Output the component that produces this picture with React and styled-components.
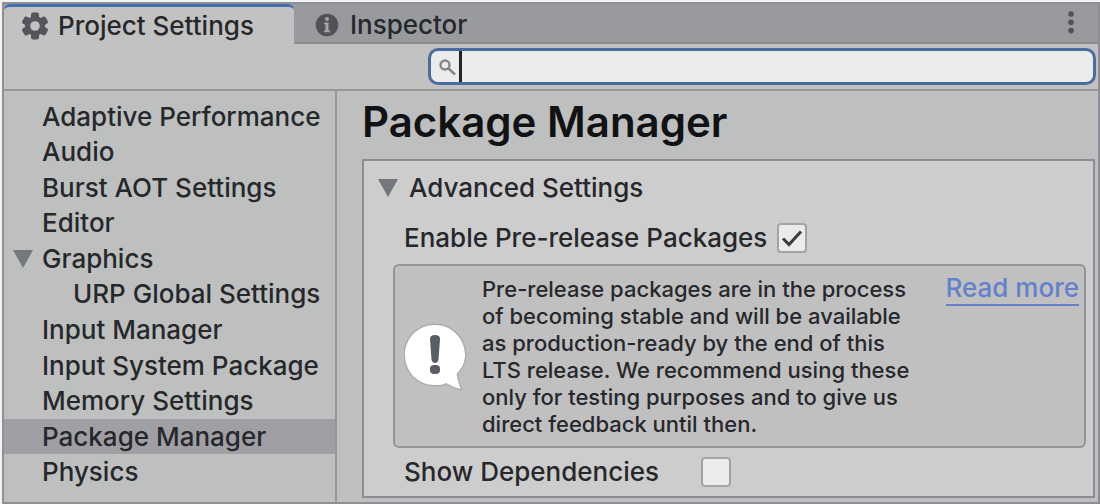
import { useState } from 'react';
import styled, { createGlobalStyle } from 'styled-components';

const GlobalStyle = createGlobalStyle`
  * {
    box-sizing: border-box;
  }
  body {
    margin: 0;
    background: #f4f4f5;
    font-family: Inter, 'Liberation Sans', sans-serif;
    color: #26282c;
  }
  button,
  input {
    font: inherit;
    color: inherit;
  }
`;

const Window = styled.div`
  display: flex;
  flex-direction: column;
  min-height: calc(100vh - 2px);
  margin: 2px 0 0 2px;
  border: 2px solid #8f9095;
  background: #bec0bf;
  font-size: 26px;
  font-weight: 450;
  line-height: 32px;
`;

const TabBar = styled.div`
  display: flex;
  height: 40px;
  background: #999a9e;
`;

const Tab = styled.button`
  display: flex;
  align-items: center;
  gap: ${props => (props.$active ? '9px' : '11px')};
  padding: 0 40px 0 ${props => (props.$active ? '17px' : '21px')};
  border: 0;
  border-top: 3px solid ${props => (props.$active ? '#446db0' : 'transparent')};
  border-bottom: ${props => (props.$active ? '0' : '2px solid #8c8d91')};
  border-radius: ${props => (props.$active ? '6px 6px 0 0' : '0')};
  background: ${props => (props.$active ? '#c2c2c2' : 'transparent')};
  white-space: nowrap;
`;

const TabFill = styled.div`
  display: flex;
  flex: 1;
  justify-content: flex-end;
  align-items: center;
  padding-right: 19px;
  border-bottom: 2px solid #8c8d91;
`;

const MenuButton = styled.button`
  display: flex;
  padding: 0;
  border: 0;
  background: none;
`;

const Toolbar = styled.div`
  display: flex;
  justify-content: flex-end;
  padding: 4px 2px 4px 25px;
  border-bottom: 2px solid #95969a;
  background: #c2c2c2;
`;

const SearchField = styled.label`
  display: flex;
  flex: 0 1 668px;
  align-items: center;
  height: 37px;
  padding-left: 8px;
  overflow: hidden;
  border: 3px solid #4a6c9f;
  border-radius: 10px;
  background: #ebebeb;
`;

const Caret = styled.span`
  width: 3px;
  height: 31px;
  margin-left: 3px;
  background: #202226;
`;

const SearchInput = styled.input`
  flex: 1;
  min-width: 0;
  height: 31px;
  border: 0;
  outline: 0;
  background: transparent;
`;

const Body = styled.div`
  display: flex;
  flex: 1;
`;

const Sidebar = styled.nav`
  display: grid;
  grid-auto-rows: 1fr;
  flex: 0 0 333px;
  padding: 8px 0 12px;
  border-right: 2px solid #95969a;
`;

const SidebarItem = styled.a`
  display: flex;
  align-items: center;
  gap: 9px;
  padding-left: ${props => (props.$nested ? '69px' : props.$open ? '9px' : '38px')};
  background: ${props => (props.$selected ? '#a09fa4' : 'transparent')};
  color: inherit;
  text-decoration: none;
  white-space: nowrap;
`;

const Content = styled.main`
  flex: 1;
  min-width: 0;
  padding: 6px 3px 4px 25px;
`;

const Title = styled.h1`
  margin: 0 0 12px;
  font-size: 42px;
  font-weight: 600;
  line-height: 50px;
  color: #111213;
`;

const Panel = styled.section`
  padding: 11px 7px 8px 29px;
  border: 2px solid #8c8d92;
  background: #cdcdcd;
`;

const PanelHeader = styled.button`
  display: flex;
  align-items: center;
  gap: 11px;
  margin: 0 0 18px -15px;
  padding: 0;
  border: 0;
  background: none;
`;

const OptionRow = styled.div`
  display: flex;
  align-items: center;
  gap: ${props => (props.$wide ? '42px' : '10px')};
  padding-left: 11px;
`;

const CheckboxWrap = styled.span`
  display: grid;
  width: 30px;
  height: 30px;

  > * {
    grid-area: 1 / 1;
  }
`;

const CheckboxInput = styled.input`
  appearance: none;
  width: 30px;
  height: 30px;
  margin: 0;
  border: 2px solid #a2a3a6;
  border-radius: 4px;
  background: #ebebeb;
`;

const CheckMark = styled.svg`
  pointer-events: none;
`;

const Notice = styled.div`
  display: flex;
  align-items: center;
  margin: 10px 0 8px;
  padding: 10px 5px 8px 9px;
  border: 2px solid #939499;
  border-radius: 6px;
  background: #c0c0c0;
`;

const NoticeText = styled.p`
  flex: 0 1 438px;
  margin: 0 auto 0 14px;
  font-size: 22px;
  line-height: 27px;
`;

const ReadMore = styled.a`
  align-self: flex-start;
  padding-bottom: 4px;
  border-bottom: 2px solid #6480cc;
  line-height: 24px;
  color: #6480cc;
  text-decoration: none;
  white-space: nowrap;
`;

const sections = [
  { name: 'Adaptive Performance' },
  { name: 'Audio' },
  { name: 'Burst AOT Settings' },
  { name: 'Editor' },
  { name: 'Graphics', open: true },
  { name: 'URP Global Settings', nested: true },
  { name: 'Input Manager' },
  { name: 'Input System Package' },
  { name: 'Memory Settings' },
  { name: 'Package Manager' },
  { name: 'Physics' },
];

const GearIcon = () => (
  <svg width='28' height='28' viewBox='0 0 28 28' aria-hidden='true'>
    <g fill='#54565b'>
      {[0, 60, 120].map(angle => (
        <rect
          key={angle}
          x='10'
          y='0.5'
          width='8'
          height='27'
          rx='2'
          transform={`rotate(${angle} 14 14)`}
        />
      ))}
      <circle cx='14' cy='14' r='10' />
    </g>
    <circle cx='14' cy='14' r='4.8' fill='#c2c2c2' />
  </svg>
);

const InfoIcon = () => (
  <svg width='24' height='24' viewBox='0 0 24 24' aria-hidden='true'>
    <circle cx='12' cy='12' r='11.3' fill='#505257' />
    <circle cx='12' cy='6' r='2' fill='#a5a6aa' />
    <path d='M9 9.5h4.5v8H15v1.8H9v-1.8h1.5v-6.2H9z' fill='#a5a6aa' />
  </svg>
);

const MoreIcon = () => (
  <svg width='16' height='26' viewBox='0 0 16 26' fill='#505257' aria-hidden='true'>
    <circle cx='8' cy='4' r='2.8' />
    <circle cx='8' cy='12.3' r='2.8' />
    <circle cx='8' cy='20.6' r='2.8' />
  </svg>
);

const SearchIcon = () => (
  <svg width='17' height='18' viewBox='0 0 17 18' fill='none' stroke='#85878c' aria-hidden='true'>
    <circle cx='6' cy='7' r='4.5' strokeWidth='2.4' />
    <path d='M9.5 10.5L16 16.5' strokeWidth='2.6' />
  </svg>
);

const Triangle = () => (
  <svg width='20' height='18' viewBox='0 0 20 18' aria-hidden='true'>
    <path d='M0 0H20L10 18Z' fill='#74777d' />
  </svg>
);

const BubbleIcon = () => (
  <svg width='64' height='70' viewBox='0 0 64 70' aria-hidden='true'>
    <path
      d='M31 3C47 3 61 16 61 33C61 40 58 46 52.5 52Q54 60 56.5 67Q49 65 42 61C39 63 35 63 31 63C14 63 1 50 1 33C1 16 14 3 31 3Z'
      fill='#fff'
      stroke='#acadb1'
      strokeWidth='3'
      strokeLinejoin='round'
      paintOrder='stroke'
    />
    <path d='M26 17Q26 13 31 13Q36 13 36 17L34.5 38Q33.5 41 31 41Q28.5 41 27.5 38Z' fill='#595d64' />
    <rect x='26' y='43' width='10' height='9' rx='4' fill='#595d64' />
  </svg>
);

const Checkbox = ({ id, defaultChecked }) => {
  const [checked, setChecked] = useState(defaultChecked);
  return (
    <CheckboxWrap>
      <CheckboxInput
        id={id}
        type='checkbox'
        checked={checked}
        onChange={e => setChecked(e.target.checked)}
      />
      {checked && (
        <CheckMark width='30' height='30' viewBox='0 0 30 30'>
          <path d='M6 15.5L12 21.5L24 8.5' fill='none' stroke='#3a3c40' strokeWidth='3' />
        </CheckMark>
      )}
    </CheckboxWrap>
  );
};

const App = () => {
  const [selected, setSelected] = useState('Package Manager');
  return (
    <>
      <GlobalStyle />
      <Window>
        <TabBar>
          <Tab $active>
            <GearIcon />
            Project Settings
          </Tab>
          <Tab>
            <InfoIcon />
            Inspector
          </Tab>
          <TabFill>
            <MenuButton aria-label='Menu'>
              <MoreIcon />
            </MenuButton>
          </TabFill>
        </TabBar>
        <Toolbar>
          <SearchField>
            <SearchIcon />
            <Caret />
            <SearchInput type='text' aria-label='Search' />
          </SearchField>
        </Toolbar>
        <Body>
          <Sidebar>
            {sections.map(section => (
              <SidebarItem
                key={section.name}
                href='#'
                $open={section.open}
                $nested={section.nested}
                $selected={section.name === selected}
                onClick={() => setSelected(section.name)}
              >
                {section.open && <Triangle />}
                {section.name}
              </SidebarItem>
            ))}
          </Sidebar>
          <Content>
            <Title>Package Manager</Title>
            <Panel>
              <PanelHeader>
                <Triangle />
                Advanced Settings
              </PanelHeader>
              <OptionRow>
                <label htmlFor='pre-release'>Enable Pre-release Packages</label>
                <Checkbox id='pre-release' defaultChecked />
              </OptionRow>
              <Notice>
                <BubbleIcon />
                <NoticeText>
                  Pre-release packages are in the process of becoming stable and will be available
                  as production-ready by the end of this LTS release. We recommend using these only
                  for testing purposes and to give us direct feedback until then.
                </NoticeText>
                <ReadMore href='#'>Read more</ReadMore>
              </Notice>
              <OptionRow $wide>
                <label htmlFor='dependencies'>Show Dependencies</label>
                <Checkbox id='dependencies' defaultChecked={false} />
              </OptionRow>
            </Panel>
          </Content>
        </Body>
      </Window>
    </>
  );
};

export default App;
